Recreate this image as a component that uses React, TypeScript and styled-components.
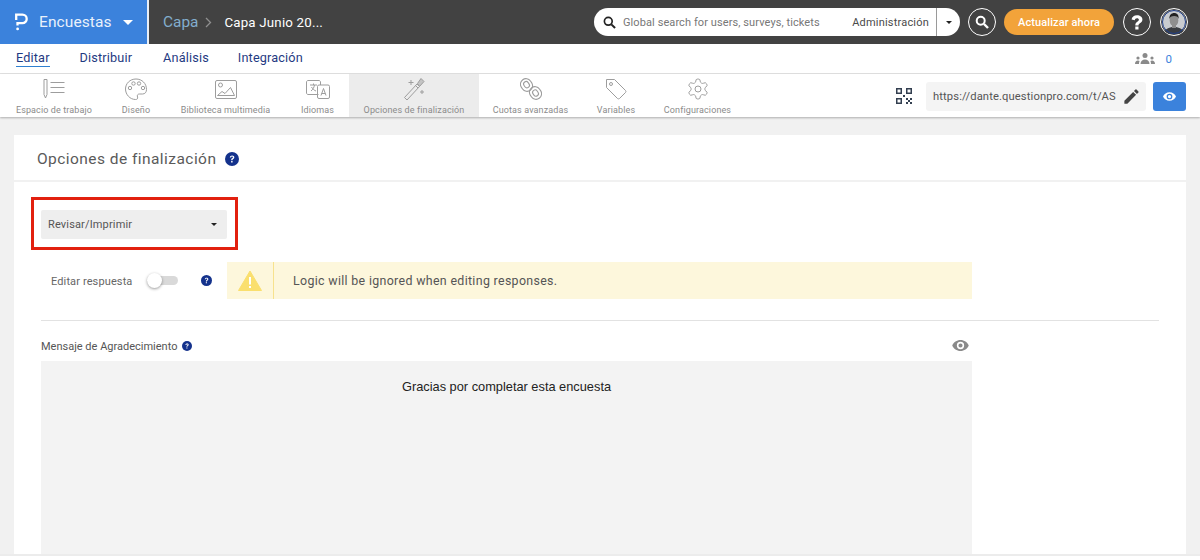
import React from "react";
import styled, { createGlobalStyle } from "styled-components";

const FONT = `"Roboto", "Liberation Sans", sans-serif`;

const Global = createGlobalStyle`
  html, body { margin: 0; padding: 0; height: 560px; overflow: hidden; background: #fff; }
  body { font-family: ${FONT}; }
  * { box-sizing: border-box; }
`;

const Page = styled.div`width: 1200px; height: 560px; display: flex; flex-direction: column; overflow: hidden; background: #f1f1f1;`;

const TopBar = styled.header`height: 44px; background: #424242; display: flex; align-items: center; flex: none;`;
const Brand = styled.div`width: 149px; height: 44px; background: #3b82dc; border-right: 2px solid #e8eef6; display: flex; align-items: center; padding-left: 14px; color: #e9f1fb; flex: none;`;
const BrandName = styled.span`font-size: 15.5px; margin-left: 11px; letter-spacing: 0.1px;`;
const BrandCaret = styled.span`margin-left: 11px; width: 0; height: 0; border-left: 5px solid transparent; border-right: 5px solid transparent; border-top: 5px solid #fff;`;
const Crumbs = styled.div`display: flex; align-items: center; padding-left: 14px; flex: 1; min-width: 0;`;
const CrumbRoot = styled.span`font-size: 15.400px; color: #83aecd;`;
const CrumbSep = styled.span`margin: 0 12px 0 7px; display: flex;`;
const CrumbCurrent = styled.span`font-size: 13.300px; color: #fff; letter-spacing: 0.2px;`;
const SearchBox = styled.div`width: 366px; height: 28px; margin-right: 8px; border-radius: 14px; background: #fff; display: flex; align-items: center; padding-left: 9px; flex: none;`;
const SearchHint = styled.span`font-size: 11px; color: #777; margin-left: 7px; flex: 1; white-space: nowrap; letter-spacing: 0.09px;`;
const SearchScope = styled.span`font-size: 11px; color: #4a4a4a; letter-spacing: 0.2px; white-space: nowrap;`;
const ScopeCaret = styled.span`width: 24px; height: 28px; margin-left: 7px; border-left: 1px solid #9a9a9a; display: flex; align-items: center; justify-content: center;`;
const SmallCaret = styled.span`width: 0; height: 0; border-left: 3.5px solid transparent; border-right: 3.5px solid transparent; border-top: 3.5px solid #222;`;
const RoundButton = styled.span`width: 28px; height: 28px; border-radius: 50%; border: 1.5px solid #fff; display: flex; align-items: center; justify-content: center; flex: none; overflow: hidden;`;
const Upgrade = styled.span`width: 110px; height: 26px; margin: 0 9px 0 8px; border-radius: 13px; background: #f2a33a; color: #fff; font-size: 11px; font-weight: 500; display: flex; align-items: center; justify-content: center; letter-spacing: 0.1px; flex: none;`;
const Avatar = styled(RoundButton)`margin: 0 12px 0 9px; padding: 1px; background: #424242;`;

const NavRow = styled.nav`height: 30px; background: #fff; border-bottom: 1px solid #e2e2e2; display: flex; align-items: center; padding: 0 16px; flex: none;`;
const NavTab = styled.a<{ $active?: boolean; $gap: number }>`
  font-size: 12.700px; color: #1f3a82; letter-spacing: 0.15px; margin-right: ${(p) => p.$gap}px; padding-bottom: 1px;
  border-bottom: 1px solid ${(p) => (p.$active ? "#2f80d0" : "transparent")};
`;
const NavRight = styled.div`margin-left: auto; display: flex; align-items: center; gap: 11px; margin-right: 12px;`;
const Count = styled.span`font-size: 11.5px; color: #3b82dc;`;

const ToolBar = styled.div`height: 43px; background: #fff; display: flex; align-items: stretch; padding-left: 1px; box-shadow: 0 1px 2px rgba(0,0,0,.28); position: relative; flex: none;`;
const Tool = styled.div<{ $w: number; $active?: boolean }>`
  width: ${(p) => p.$w}px; flex: none; display: flex; flex-direction: column; align-items: center; justify-content: flex-start; padding-top: 3px;
  background: ${(p) => (p.$active ? "#ececec" : "transparent")};
`;
const ToolIcon = styled.span`height: 24px; display: flex; align-items: center; justify-content: center;`;
const ToolLabel = styled.span`font-size: 9px; color: #8b8b8b; margin-top: 4px; white-space: nowrap; letter-spacing: 0.12px;`;
const ToolRight = styled.div`margin-left: auto; display: flex; align-items: center; padding: 1px 14px 0 0;`;
const UrlBox = styled.div`width: 220px; height: 29px; margin-left: 14px; background: #f4f4f4; border-radius: 3px; display: flex; align-items: center; justify-content: space-between; padding: 0 5px 0 7px; font-size: 11.2px; color: #555; letter-spacing: 0.12px;`;
const PreviewButton = styled.span`width: 33px; height: 29px; margin-left: 7px; background: #3b82dc; border-radius: 3px; display: flex; align-items: center; justify-content: center;`;

const Main = styled.main`flex: 1; padding: 18px 14px 0; min-height: 0;`;
const Card = styled.section`width: 1172px; height: 419px; background: #fff; overflow: hidden;`;
const CardHead = styled.div`height: 47px; padding: 3px 23px 0; border-bottom: 2px solid #f1f1f1; display: flex; align-items: center; gap: 9px;`;
const CardTitle = styled.h1`margin: 0; font-size: 15.5px; font-weight: 400; color: #5a5a5a; letter-spacing: 0.45px;`;
const CardBody = styled.div`padding: 15px 27px 0;`;
const Highlight = styled.div`width: 207px; height: 53px; margin-left: -10px; border: 3px solid #e2200f; padding: 10px 7px;`;
const Select = styled.div`width: 186px; height: 29px; background: #eeeeee; border-radius: 2px; display: flex; align-items: center; justify-content: space-between; padding: 0 10px 0 7px; font-size: 11px; color: #555; letter-spacing: 0.15px;`;
const OptionRow = styled.div`display: flex; align-items: center; height: 37px; margin-top: 12px;`;
const OptionLabel = styled.span`font-size: 11px; color: #666; margin-left: 10px; width: 96px; padding-top: 1px; letter-spacing: 0.12px;`;
const Switch = styled.span`width: 31px; height: 9px; border-radius: 5px; background: #d9d9d9; position: relative; display: block;`;
const Knob = styled.span`position: absolute; left: 0; top: -3px; width: 15px; height: 15px; border-radius: 50%; background: #fff; box-shadow: 0 1px 3px rgba(0,0,0,.4);`;
const HelpSpot = styled.span<{ $l: number; $r?: number }>`display: flex; margin-left: ${(p) => p.$l}px; margin-right: ${(p) => p.$r ?? 0}px;`;
const Warning = styled.div`width: 745px; height: 37px; background: #fdf7dc; display: flex; align-items: center; font-size: 12.4px; color: #555; letter-spacing: 0.33px;`;
const WarningIcon = styled.span`width: 47px; height: 37px; border-right: 1px solid #f7e28e; display: flex; align-items: center; justify-content: center; flex: none;`;
const WarningText = styled.span`margin-left: 19px;`;
const Rule = styled.hr`margin: 21px 0 0; border: 0; border-top: 1px solid #e2e2e2; width: 1118px;`;
const LabelRow = styled.div`width: 931px; height: 40px; display: flex; align-items: center; justify-content: space-between; font-size: 11px; color: #555; padding: 9px 3px 0 0;`;
const LabelGroup = styled.div`display: flex; align-items: center; gap: 5px; padding-top: 1px;`;
const Editor = styled.div`width: 931px; height: 210px; background: #f3f3f3; padding-top: 18px; text-align: center; font-family: "Liberation Sans", Arial, sans-serif; font-size: 12.800px; color: #222;`;
const Footer = styled.div`height: 6px; background: #fff; border-top: 2px solid #ececec; flex: none; margin-top: -6px; position: relative;`;

const Help = ({ s = 14 }: { s?: number }) => (
  <svg width={s} height={s} viewBox="0 0 24 24"><circle cx="12" cy="12" r="12" fill="#14328c"/><path d="M8.2 9.4c.2-2.3 1.8-3.6 4-3.6s3.8 1.3 3.8 3.2c0 1.5-.8 2.2-1.9 3-.9.6-1.2 1-1.2 2h-2.3c0-1.7.5-2.4 1.7-3.2.8-.6 1.3-1 1.3-1.7s-.6-1.3-1.5-1.3c-1 0-1.6.6-1.7 1.6zM10.5 15.6h2.5v2.6h-2.5z" fill="#fff"/></svg>
);

const S = { fill: "none", stroke: "#9d9d9d", strokeWidth: 1 } as const;
const tools = [
  { label: "Espacio de trabajo", w: 106, icon: <svg width="24" height="22" viewBox="0 0 24 22" {...S}><path d="M2 1.500h3v15l-1.500 3.500L2 16.500z"/><path d="M8.500 4.500h14M8.500 9.500h14M8.500 14.500h14"/></svg> },
  { label: "Diseño", w: 58, icon: <svg width="24" height="24" viewBox="0 0 24 24" {...S}><path d="M12 2C6 2 1.500 6.500 1.500 12S6 22.500 11.500 22.500c2 0 2.500-1.200 2-2.500-.6-1.800.2-3 2-3h3c2.500 0 4-1.800 4-4.500C22.500 6.500 18 2 12 2z"/><circle cx="6" cy="11" r="1.700"/><circle cx="9.500" cy="6.500" r="1.700"/><circle cx="15" cy="6.500" r="1.700"/><circle cx="19" cy="11" r="1.700"/></svg> },
  { label: "Biblioteca multimedia", w: 121, icon: <svg width="22" height="19" viewBox="0 0 22 19" {...S}><rect x=".5" y=".5" width="21" height="18" rx="1.500"/><circle cx="5.500" cy="5" r="2"/><path d="M2.500 15.500l4.500-4 3 2 5.500-6 4 8z"/></svg> },
  { label: "Idiomas", w: 63, icon: <svg width="24" height="19" viewBox="0 0 24 19" {...S}><path d="M12.500 14.500H2c-.8 0-1.500-.7-1.500-1.500V2C.5 1.200 1.200.5 2 .5h11c.8 0 1.500.7 1.500 1.500v3"/><rect x="11.500" y="5" width="12" height="13.500" rx="1.500"/><path d="M4 5h7M7.500 3.500V5M5 11c2-1.500 3-3.500 3.500-6M5.500 7c1 2 3 3.500 4.500 4"/><path d="M15 15.500l2.500-7 2.500 7M15.800 13.500h3.400"/></svg> },
  { label: "Opciones de finalización", w: 130, active: true, icon: <svg width="22" height="24" viewBox="0 0 22 24" {...S}><path d="M1.500 20.500L14 7l2.500 2.500L4 23z"/><path d="M12.500 8.500l2.500 2.500"/><path d="M14.500 6.500l3.500-5 3 3-4.500 5z" fill="#c4c4c4"/><path d="M8 3v5M5.500 5.500h5M19 13v4M17 15h4"/></svg> },
  { label: "Cuotas avanzadas", w: 103, icon: <svg width="22" height="24" viewBox="0 0 22 24" {...S} strokeWidth={1.1}><rect x="1" y="1.500" width="11" height="13" rx="5.500" transform="rotate(-35 6.500 8)"/><rect x="4.200" y="4.500" width="5" height="6.500" rx="2.500" transform="rotate(-35 6.500 8)"/><rect x="10" y="9.500" width="11" height="13" rx="5.500" transform="rotate(-35 15.500 16)"/><rect x="13" y="12.800" width="5" height="6.500" rx="2.500" transform="rotate(-35 15.500 16)"/></svg> },
  { label: "Variables", w: 68, icon: <svg width="22" height="22" viewBox="0 0 22 22" {...S}><path d="M1.500 1.500h8l11 11c.6.6.6 1.500 0 2l-6 6c-.5.5-1.400.5-2 0l-11-11z"/><circle cx="6" cy="6" r="1.500"/></svg> },
  { label: "Configuraciones", w: 95, icon: <svg width="24" height="24" viewBox="0 0 24 24" {...S}><path d="M12.220 2h-.44a2 2 0 0 0-2 2v.18a2 2 0 0 1-1 1.730l-.43.250a2 2 0 0 1-2 0l-.15-.080a2 2 0 0 0-2.730.730l-.220.380a2 2 0 0 0 .730 2.730l.150.100a2 2 0 0 1 1 1.720v.510a2 2 0 0 1-1 1.740l-.150.090a2 2 0 0 0-.730 2.730l.220.380a2 2 0 0 0 2.730.730l.150-.080a2 2 0 0 1 2 0l.430.250a2 2 0 0 1 1 1.730V20a2 2 0 0 0 2 2h.44a2 2 0 0 0 2-2v-.18a2 2 0 0 1 1-1.730l.430-.250a2 2 0 0 1 2 0l.150.080a2 2 0 0 0 2.730-.730l.220-.390a2 2 0 0 0-.730-2.730l-.150-.080a2 2 0 0 1-1-1.740v-.500a2 2 0 0 1 1-1.740l.150-.090a2 2 0 0 0 .730-2.730l-.220-.380a2 2 0 0 0-2.730-.730l-.150.080a2 2 0 0 1-2 0l-.430-.250a2 2 0 0 1-1-1.730V4a2 2 0 0 0-2-2z"/><circle cx="12" cy="12" r="3"/></svg> },
];

const Eye = ({ c, w, h }: { c: string; w: number; h: number }) => (
  <svg width={w} height={h} viewBox="0 0 24 16"><path fillRule="evenodd" d="M12 0C6.500 0 2 3.300 0 8c2 4.700 6.500 8 12 8s10-3.300 12-8c-2-4.700-6.500-8-12-8zm0 13.300A5.300 5.300 0 1 1 12 2.700a5.300 5.300 0 0 1 0 10.600zM12 5a3 3 0 1 0 0 6 3 3 0 0 0 0-6z" fill={c}/></svg>
);

export default function App() {
  return (
    <Page>
      <Global />
      <TopBar>
        <Brand>
          <svg width="14" height="18" viewBox="0 0 14 18" fill="none"><path d="M2.200 7V1.700H8.500a4.200 4.200 0 0 1 0 8.400H3.500V12.500" stroke="#fff" strokeWidth="2.300"/><rect x="2.200" y="14.500" width="2.800" height="2.800" rx="1.400" fill="#fff"/></svg>
          <BrandName>Encuestas</BrandName>
          <BrandCaret />
        </Brand>
        <Crumbs>
          <CrumbRoot>Capa</CrumbRoot>
          <CrumbSep><svg width="7" height="11" viewBox="0 0 7 11" fill="none"><path d="M1 1l4.500 4.500L1 10" stroke="#8f8f8f" strokeWidth="1.300"/></svg></CrumbSep>
          <CrumbCurrent>Capa Junio 20...</CrumbCurrent>
        </Crumbs>
        <SearchBox>
          <svg width="13" height="13" viewBox="0 0 14 14" fill="none"><circle cx="5.700" cy="5.700" r="4.200" stroke="#222" strokeWidth="1.800"/><path d="M9 9l4 4" stroke="#222" strokeWidth="2.200"/></svg>
          <SearchHint>Global search for users, surveys, tickets</SearchHint>
          <SearchScope>Administración</SearchScope>
          <ScopeCaret><SmallCaret /></ScopeCaret>
        </SearchBox>
        <RoundButton>
          <svg width="14" height="14" viewBox="0 0 14 14" fill="none"><circle cx="5.700" cy="5.700" r="4" stroke="#fff" strokeWidth="2"/><path d="M9 9l4 4" stroke="#fff" strokeWidth="2.400"/></svg>
        </RoundButton>
        <Upgrade>Actualizar ahora</Upgrade>
        <RoundButton>
          <svg width="12" height="15" viewBox="0 0 12 15" fill="#fff"><path d="M.6 4.600C.8 1.900 2.900.3 6 .3c3 0 5.400 1.600 5.400 4.200 0 1.900-1 2.800-2.400 3.800-1.100.8-1.500 1.200-1.500 2.300H4.300c0-2 .6-2.800 2-3.800 1-.7 1.600-1.200 1.600-2.100 0-.9-.8-1.500-1.900-1.500-1.300 0-2.100.8-2.200 2zM4.300 11.500h3.200v3.100H4.300z"/></svg>
        </RoundButton>
        <Avatar>
          <svg width="24" height="24" viewBox="0 0 24 24"><circle cx="12" cy="12" r="12" fill="#c9ccd0"/><path d="M2 24c.5-5 4.500-7 10-7s9.500 2 10 7z" fill="#3a3d42"/><path d="M10 14h4v4h-4z" fill="#8b8b8b"/><ellipse cx="12" cy="10.500" rx="4.300" ry="5.500" fill="#8f8f8f"/><path d="M7.500 9c-.5-4 2-6 4.700-6s5 2 4.300 6c-.5-2-1.500-3-4.300-3S8 7 7.500 9z" fill="#222"/><circle cx="12" cy="12" r="11.500" fill="none" stroke="#20408c"/></svg>
        </Avatar>
      </TopBar>
      <NavRow>
        <NavTab $active $gap={30}>Editar</NavTab>
        <NavTab $gap={31}>Distribuir</NavTab>
        <NavTab $gap={29}>Análisis</NavTab>
        <NavTab $gap={0}>Integración</NavTab>
        <NavRight>
          <svg width="20" height="11" viewBox="0 0 20 11" fill="#8a8a8a"><circle cx="10" cy="2.500" r="2.500"/><path d="M5.500 11c0-3 2-4.500 4.500-4.500s4.500 1.500 4.500 4.500z"/><circle cx="3" cy="5" r="1.600"/><path d="M0 11c0-2 1.200-3.500 3-3.500.7 0 1.200.2 1.600.5-.4.800-.6 1.800-.6 3z"/><circle cx="17" cy="5" r="1.600"/><path d="M20 11c0-2-1.200-3.500-3-3.500-.7 0-1.200.2-1.600.5.400.8.600 1.800.6 3z"/></svg>
          <Count>0</Count>
        </NavRight>
      </NavRow>
      <ToolBar>
        {tools.map((t) => (
          <Tool key={t.label} $w={t.w} $active={t.active}>
            <ToolIcon>{t.icon}</ToolIcon>
            <ToolLabel>{t.label}</ToolLabel>
          </Tool>
        ))}
        <ToolRight>
          <svg width="16" height="16" viewBox="0 0 16 16" fill="#333f50"><path fillRule="evenodd" d="M0 0h6v6H0zM1.500 1.500v3h3v-3zM10 0h6v6h-6zM11.500 1.500v3h3v-3zM0 10h6v6H0zM1.500 11.500v3h3v-3z"/><path d="M7 7h2v2H7zM10 10h2v2h-2zM14 10h2v2h-2zM10 14h2v2h-2zM14 14h2v2h-2zM12 12h2v2h-2z"/></svg>
          <UrlBox>
            https://dante.questionpro.com/t/AS
            <svg width="19" height="19" viewBox="0 0 24 24" fill="#444"><path d="M3 17.250V21h3.750L17.810 9.940l-3.750-3.750zM20.710 7.040a1 1 0 0 0 0-1.410l-2.340-2.340a1 1 0 0 0-1.410 0l-1.830 1.830 3.750 3.750z"/></svg>
          </UrlBox>
          <PreviewButton><Eye c="#fff" w={13} h={9} /></PreviewButton>
        </ToolRight>
      </ToolBar>
      <Main>
        <Card>
          <CardHead>
            <CardTitle>Opciones de finalización</CardTitle>
            <Help s={14} />
          </CardHead>
          <CardBody>
            <Highlight>
              <Select>Revisar/Imprimir<SmallCaret /></Select>
            </Highlight>
            <OptionRow>
              <OptionLabel>Editar respuesta</OptionLabel>
              <Switch><Knob /></Switch>
              <HelpSpot $l={23} $r={15}><Help s={11} /></HelpSpot>
              <Warning>
                <WarningIcon>
                  <svg width="24" height="21" viewBox="0 0 24 21"><path d="M12 1L23.500 20.500H.5z" fill="#fadf6e" stroke="#fadf6e" strokeLinejoin="round"/><path d="M11 7h2v7.500h-2zM11 16h2v2h-2z" fill="#fff"/></svg>
                </WarningIcon>
                <WarningText>Logic will be ignored when editing responses.</WarningText>
              </Warning>
            </OptionRow>
            <Rule />
            <LabelRow>
              <LabelGroup>Mensaje de Agradecimiento <Help s={10} /></LabelGroup>
              <Eye c="#8a8a8a" w={17} h={11} />
            </LabelRow>
            <Editor>Gracias por completar esta encuesta</Editor>
          </CardBody>
        </Card>
      </Main>
      <Footer />
    </Page>
  );
}
